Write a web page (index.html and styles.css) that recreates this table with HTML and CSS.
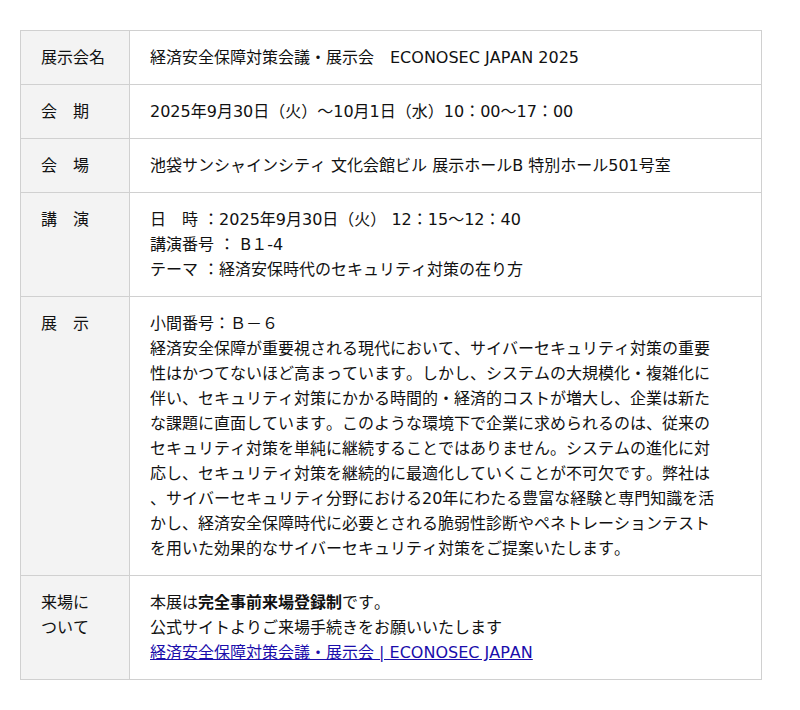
FILE: index.html
```html
<!DOCTYPE html>
<html lang="ja">
<head>
<meta charset="utf-8">
<link rel="stylesheet" href="styles.css">
</head>
<body>
<table class="info">
  <colgroup><col class="c-label"><col class="c-body"></colgroup>
  <tr>
    <th>展示会名</th>
    <td>経済安全保障対策会議・展示会　ECONOSEC JAPAN 2025</td>
  </tr>
  <tr>
    <th>会　期</th>
    <td>2025年9月30日（火）～10月1日（水）10：00～17：00</td>
  </tr>
  <tr>
    <th>会　場</th>
    <td>池袋サンシャインシティ 文化会館ビル 展示ホールB 特別ホール501号室</td>
  </tr>
  <tr>
    <th>講　演</th>
    <td>日　時 ：2025年9月30日（火） 12：15～12：40<br>講演番号 ： B１-4<br>テーマ ：経済安保時代のセキュリティ対策の在り方</td>
  </tr>
  <tr>
    <th>展　示</th>
    <td>小間番号：Ｂ－６<br>経済安全保障が重要視される現代において、サイバーセキュリティ対策の重要<br>性はかつてないほど高まっています。しかし、システムの大規模化・複雑化に<br>伴い、セキュリティ対策にかかる時間的・経済的コストが増大し、企業は新た<br>な課題に直面しています。このような環境下で企業に求められるのは、従来の<br>セキュリティ対策を単純に継続することではありません。システムの進化に対<br>応し、セキュリティ対策を継続的に最適化していくことが不可欠です。弊社は<br>、サイバーセキュリティ分野における20年にわたる豊富な経験と専門知識を活<br>かし、経済安全保障時代に必要とされる脆弱性診断やペネトレーションテスト<br>を用いた効果的なサイバーセキュリティ対策をご提案いたします。</td>
  </tr>
  <tr>
    <th>来場に<br>ついて</th>
    <td>本展は<strong>完全事前来場登録制</strong>です。<br>公式サイトよりご来場手続きをお願いいたします<br><a href="#">経済安全保障対策会議・展示会 | ECONOSEC JAPAN</a></td>
  </tr>
</table>
</body>
</html>
```
FILE: styles.css
```css
html, body {
  margin: 0;
  padding: 0;
  background: #fff;
}
body {
  padding: 30px 20px;
  font-family: "DejaVu Sans", "Noto Sans CJK JP", sans-serif;
  font-size: 16px;
  line-height: 25px;
  color: #111;
  font-kerning: none;
  text-spacing-trim: space-all;
}
.info {
  width: 742px;
  border-collapse: collapse;
  table-layout: fixed;
}
.c-label { width: 109px; }
.info th, .info td {
  border: 1px solid #d0d0d0;
  padding: 14px 20px;
  text-align: left;
  vertical-align: top;
  font-weight: normal;
  white-space: nowrap;
}
.info th {
  background: #f3f3f3;
}
.info strong {
  font-weight: bold;
}
.info a {
  color: #1a0dab;
  text-decoration: underline;
}
```
